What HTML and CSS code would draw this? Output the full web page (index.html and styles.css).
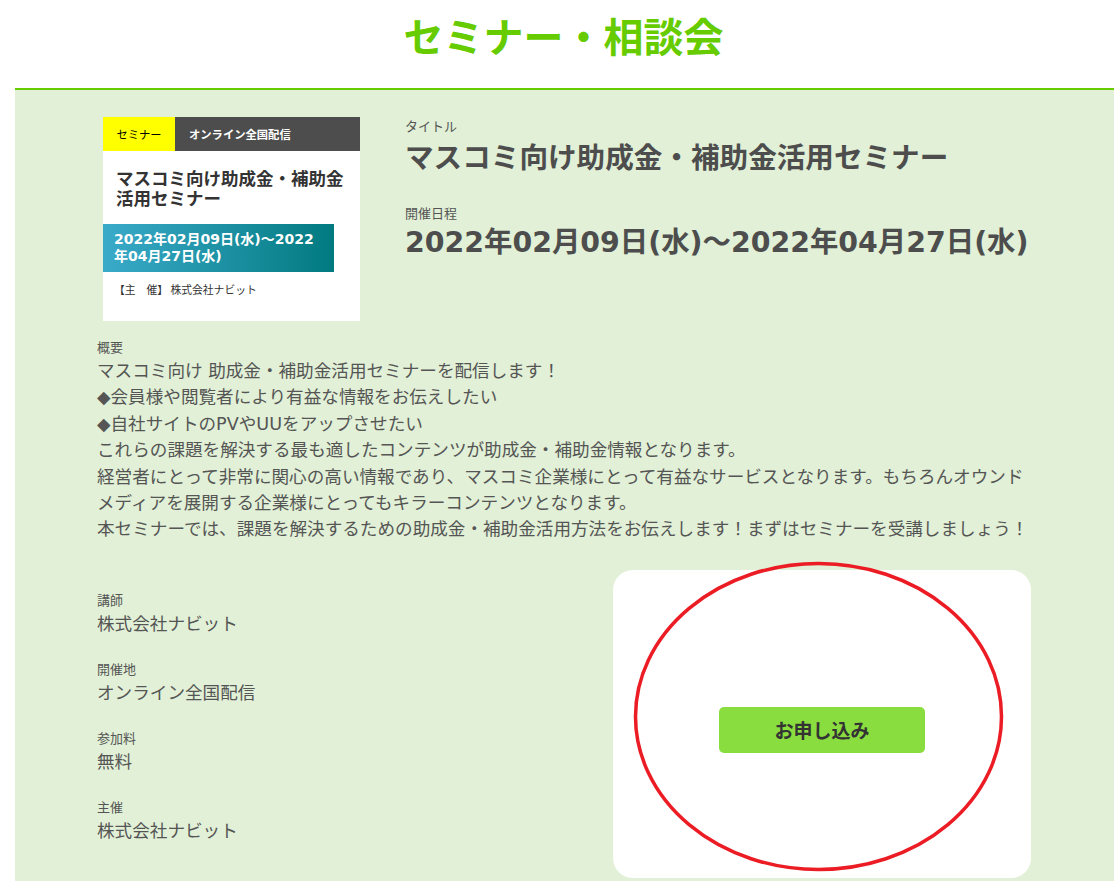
FILE: index.html
```html
<!DOCTYPE html>
<html lang="ja">
<head>
  <meta charset="UTF-8">
  <meta name="viewport" content="width=device-width, initial-scale=1.0">
  <title>セミナー・相談会</title>
  <link rel="stylesheet" href="styles.css">
</head>
<body>

<header class="page-header">
  <h1>セミナー・相談会</h1>
</header>

<main class="seminar">
  <div class="seminar-inner">

    <!-- 上部：サムネイルとタイトル -->
    <section class="seminar-top">
      <div class="thumb">
        <div class="thumb-tags">
          <span class="tag-type">セミナー</span>
          <span class="tag-place">オンライン全国配信</span>
        </div>
        <p class="thumb-title">マスコミ向け助成金・補助金活用セミナー</p>
        <p class="thumb-date">2022年02月09日(水)～2022年04月27日(水)</p>
        <p class="thumb-host">【主　催】 株式会社ナビット</p>
      </div>

      <div class="summary">
        <p class="label">タイトル</p>
        <h2 class="summary-title">マスコミ向け助成金・補助金活用セミナー</h2>
        <p class="label label-date">開催日程</p>
        <p class="summary-date">2022年02月09日(水)～2022年04月27日(水)</p>
      </div>
    </section>

    <!-- 概要 -->
    <section class="overview">
      <p class="label">概要</p>
      <p class="text">
        マスコミ向け 助成金・補助金活用セミナーを配信します！<br>
        ◆会員様や閲覧者により有益な情報をお伝えしたい<br>
        ◆自社サイトのPVやUUをアップさせたい<br>
        これらの課題を解決する最も適したコンテンツが助成金・補助金情報となります。<br>
        経営者にとって非常に関心の高い情報であり、マスコミ企業様にとって有益なサービスとなります。もちろんオウンドメディアを展開する企業様にとってもキラーコンテンツとなります。<br>
        本セミナーでは、課題を解決するための助成金・補助金活用方法をお伝えします！まずはセミナーを受講しましょう！
      </p>
    </section>

    <!-- 詳細と申し込み -->
    <section class="seminar-bottom">
      <dl class="info">
        <dt>講師</dt>
        <dd>株式会社ナビット</dd>
        <dt>開催地</dt>
        <dd>オンライン全国配信</dd>
        <dt>参加料</dt>
        <dd>無料</dd>
        <dt>主催</dt>
        <dd>株式会社ナビット</dd>
      </dl>

      <div class="entry">
        <button type="button" class="entry-btn">お申し込み</button>
        <svg class="mark" width="371" height="311" viewBox="0 0 371 311">
          <ellipse cx="185.5" cy="155.5" rx="183" ry="153" fill="none" stroke="#ec1c24" stroke-width="3.5"/>
        </svg>
      </div>
    </section>

  </div>
</main>

</body>
</html>
```

FILE: styles.css
```css
body {
  margin: 0;
  font-family: "DejaVu Sans", "Noto Sans CJK JP", sans-serif;
  color: #555555;
  background-color: #ffffff;
}
p {
  margin: 0;
}

/* ヘッダー */
.page-header {
  height: 88px;
  text-align: center;
}
.page-header h1 {
  margin: 0;
  padding-top: 7px;
  padding-left: 8px;
  font-family: "Noto Sans CJK JP", sans-serif;
  font-size: 40px;
  line-height: 56px;
  color: #66cc00;
}

/* メインパネル */
.seminar {
  margin-left: 15px;
  width: 1099px;
  background-color: #e1f0d6;
  border-top: 2px solid #66cc00;
  padding: 27px 0 40px;
}
.seminar-inner {
  width: 934px;
  margin-left: 82px;
}
.label {
  font-size: 13px;
  line-height: 20px;
  color: #555555;
}

/* 上部 */
.seminar-top {
  display: flex;
  gap: 45px;
  padding-left: 6px;
}
.thumb {
  width: 257px;
  height: 204px;
  background-color: #ffffff;
  flex-shrink: 0;
}
.thumb-tags {
  display: flex;
  height: 34px;
  font-family: "Noto Sans CJK JP", sans-serif;
  font-size: 11.3px;
  line-height: 34px;
}
.tag-type {
  width: 72px;
  text-align: center;
  background-color: #ffff00;
  color: #000000;
}
.tag-place {
  flex: 1;
  padding-left: 14px;
  background-color: #4d4d4d;
  color: #ffffff;
  font-weight: bold;
}
.thumb-title {
  padding: 17px 13px 0;
  font-family: "Noto Sans CJK JP", sans-serif;
  font-size: 17.5px;
  font-weight: bold;
  line-height: 20px;
  color: #333333;
}
.thumb-date {
  margin-top: 16px;
  width: 231px;
  height: 48px;
  box-sizing: border-box;
  padding: 7px 11px;
  background: linear-gradient(to right, #3aaac9, #027a80);
  color: #ffffff;
  font-size: 14px;
  font-weight: bold;
  line-height: 17px;
}
.thumb-host {
  margin-top: 9px;
  padding-left: 11px;
  font-family: "Noto Sans CJK JP", sans-serif;
  font-size: 10.8px;
  line-height: 16px;
  color: #333333;
}

.summary {
  flex: 1;
  min-width: 0;
}
.summary-title {
  margin: 2px 0 0;
  font-size: 28.6px;
  line-height: 38px;
  color: #4d4d4d;
}
.label-date {
  margin-top: 27px;
}
.summary-date {
  font-size: 28.4px;
  font-weight: bold;
  line-height: 38px;
  color: #4d4d4d;
  white-space: nowrap;
}

/* 概要 */
.overview {
  margin-top: 17px;
}
.overview .text {
  font-size: 17.6px;
  line-height: 26.4px;
}

/* 下部 */
.seminar-bottom {
  display: grid;
  grid-template-columns: 1fr 418px;
  align-items: start;
  margin-top: 27px;
}
.info {
  margin: 0;
  padding-top: 21px;
}
.info dt {
  font-size: 13px;
  line-height: 20px;
}
.info dd {
  margin: 0 0 23px;
  font-size: 17.6px;
  line-height: 26px;
}
.entry {
  position: relative;
  height: 308px;
  box-sizing: border-box;
  padding-top: 12px;
  display: flex;
  justify-content: center;
  align-items: center;
  background-color: #ffffff;
  border-radius: 20px;
}
.entry-btn {
  width: 206px;
  height: 46px;
  border: none;
  border-radius: 5px;
  background-color: #8add3f;
  color: #333333;
  font-family: "Noto Sans CJK JP", sans-serif;
  font-size: 19px;
  font-weight: bold;
  cursor: pointer;
}
.entry-btn:hover {
  background-color: #7acc30;
}
/* 赤い丸（注釈） */
.mark {
  position: absolute;
  left: 20px;
  top: -9px;
  overflow: visible;
  pointer-events: none;
}
```
